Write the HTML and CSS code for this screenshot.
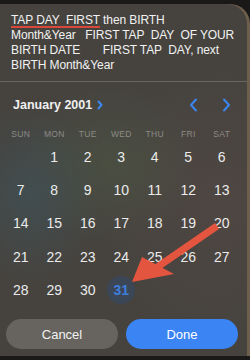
FILE: index.html
```html
<!DOCTYPE html>
<html lang="en">
<head>
  <meta charset="UTF-8">
  <meta name="viewport" content="width=device-width, initial-scale=1.0">
  <title>Date picker</title>
  <link rel="stylesheet" href="styles.css">
</head>
<body>

  <div class="sheet">
    <p class="note"><span class="mark">TAP DAY  FIRST</span> then BIRTH
Month&amp;Year   FIRST TAP  DAY  OF YOUR
BIRTH DATE       FIRST TAP  DAY, next
BIRTH Month&amp;Year</p>

    <div class="head">
      <span class="month">January 2001</span>
      <svg class="chev small" width="6" height="10" viewBox="0 0 6 10"><path d="M1.5 1.5l3 3.5-3 3.5" /></svg>
      <span class="spacer"></span>
      <svg class="chev" width="9" height="14" viewBox="0 0 9 14"><path d="M7 1.5L2 7l5 5.5" /></svg>
      <svg class="chev" width="9" height="14" viewBox="0 0 9 14"><path d="M2 1.5L7 7l-5 5.5" /></svg>
    </div>

    <div class="week">
      <span>SUN</span><span>MON</span><span>TUE</span><span>WED</span><span>THU</span><span>FRI</span><span>SAT</span>
    </div>

    <div class="days">
      <span></span><span>1</span><span>2</span><span>3</span><span>4</span><span>5</span><span>6</span>
      <span>7</span><span>8</span><span>9</span><span>10</span><span>11</span><span>12</span><span>13</span>
      <span>14</span><span>15</span><span>16</span><span>17</span><span>18</span><span>19</span><span>20</span>
      <span>21</span><span>22</span><span>23</span><span>24</span><span>25</span><span>26</span><span>27</span>
      <span>28</span><span>29</span><span>30</span><span class="sel"><b>31</b></span>
    </div>

    <div class="buttons">
      <button class="cancel">Cancel</button>
      <button class="done">Done</button>
    </div>

    <!-- red arrow drawn over the calendar -->
    <svg class="arrow" width="250" height="360" viewBox="0 0 250 360">
      <line x1="217" y1="226" x2="156" y2="268" />
      <polygon points="132,282 142,257 174,274" />
    </svg>
  </div>

</body>
</html>
```

FILE: styles.css
```css
body {
  margin: 0;
  width: 250px;
  height: 360px;
  overflow: hidden;
  background: #1b1917;
  font-family: "Liberation Sans", Arial, sans-serif;
}

.sheet {
  position: relative;
  margin-top: 4px;
  width: 247px;
  height: 352px;
  border-top-right-radius: 20px;
  background:
    radial-gradient(ellipse 70px 90px at 30px 190px, rgba(60, 90, 100, 0.45), transparent),
    radial-gradient(ellipse 90px 80px at 110px 160px, rgba(80, 100, 70, 0.35), transparent),
    radial-gradient(ellipse 120px 140px at 220px 200px, rgba(90, 75, 70, 0.4), transparent),
    #46433f;
  box-shadow: 3px 0 0 #6e5e4c;
}

.note {
  margin: 0;
  padding: 9px 6px 8px 11px;
  font-size: 12px;
  letter-spacing: -0.1px;
  line-height: 15px;
  color: #f2f2f2;
  white-space: pre;
  border-bottom: 1px solid rgba(255, 255, 255, 0.18);
}

.mark {
  text-decoration: underline;
  text-decoration-color: #d9473a;
  text-decoration-thickness: 2px;
  text-underline-offset: 2px;
}

.head {
  display: flex;
  align-items: center;
  height: 46px;
  padding: 0 16px 0 13px;
  gap: 5px;
}

.month {
  font-size: 12.5px;
  font-weight: 700;
  color: #f0f0f0;
}

.spacer {
  flex: 1;
}

.chev path {
  fill: none;
  stroke: #3b86f0;
  stroke-width: 2;
  stroke-linecap: round;
  stroke-linejoin: round;
}

.chev + .chev {
  margin-left: 19px;
}

.week,
.days {
  display: grid;
  grid-template-columns: repeat(7, 33.5px);
  padding-left: 4px;
}

.week {
  height: 11px;
  align-items: center;
  font-size: 8.5px;
  letter-spacing: 0.3px;
  color: #8c8a86;
  text-align: center;
}

.days {
  grid-auto-rows: 33.3px;
  margin-top: 1px;
  font-size: 14px;
  color: #ebebeb;
}

.days span {
  display: flex;
  align-items: center;
  justify-content: center;
}

.sel b {
  display: flex;
  align-items: center;
  justify-content: center;
  width: 28px;
  height: 28px;
  border-radius: 50%;
  background: #3b4656;
  color: #3e7fdc;
  font-weight: 600;
}

.buttons {
  display: flex;
  gap: 8px;
  padding: 13px 9px 0 6px;
}

button {
  flex: 1;
  height: 30px;
  border: none;
  border-radius: 15px;
  font-family: inherit;
  font-size: 13px;
  color: #f2f2f2;
}

.cancel {
  background: #67645f;
}

.done {
  background: #3a84f4;
  color: #fff;
}

.arrow {
  position: absolute;
  left: 0;
  top: -4px;
}

.arrow line {
  stroke: #e3553f;
  stroke-width: 7;
}

.arrow polygon {
  fill: #e3553f;
}
```
